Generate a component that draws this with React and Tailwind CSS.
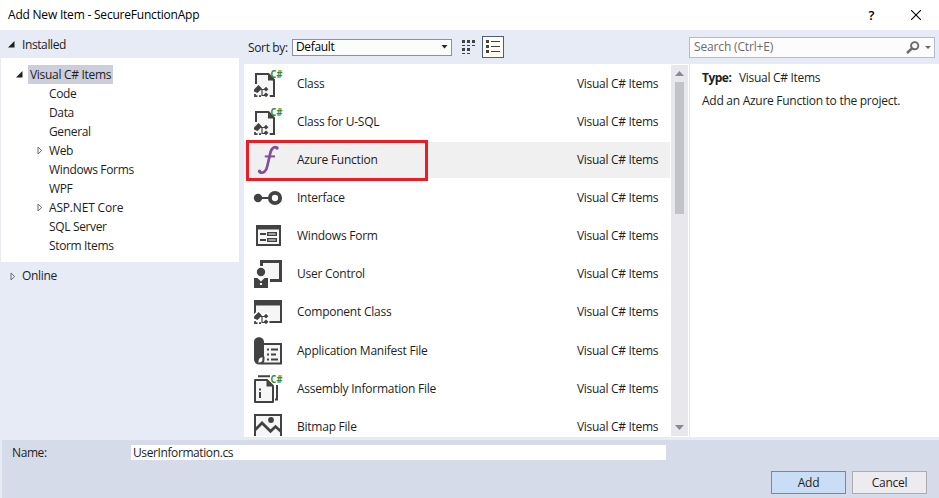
import React from "react";

const DARK = "#424242";

function Svg({ children }) {
  return (
    <svg width="28" height="28" viewBox="0 0 28 28" fill="none" className="block overflow-visible">
      {children}
    </svg>
  );
}

function CSharp() {
  return (
    <text x="16.6" y="7.5" fill="#388a34" fontSize="10" fontWeight="700" fontFamily="Noto Sans, Open Sans, sans-serif" letterSpacing="0" textLength="11.8" lengthAdjust="spacingAndGlyphs">
      C#
    </text>
  );
}

function Parts({ y = 0 }) {
  return (
    <g transform={`translate(0 ${y})`}>
      <path d="M0 18.5L4.5 14L8 17.5L3.5 22L0 20.5Z" fill={DARK} />
      <path d="M6 18.5H11M8 18.5V24.5H11.5" stroke={DARK} strokeWidth="1.2" />
      <path d="M12 15.8L14.4 18.2L12 20.6L9.6 18.2ZM12 21.4L14.4 23.8L12 26.2L9.6 23.8Z" fill={DARK} />
      <path d="M1 23V25.2H3.5M5 25.2H7" stroke={DARK} strokeWidth="1.7" />
    </g>
  );
}

function ClassIcon() {
  return (
    <Svg>
      <path d="M2 4H14L20 10V26H2Z" fill="#f6f6f6" />
      <path d="M2 14V4H14.5L20 10V26H15.5" stroke={DARK} strokeWidth="2" />
      <path d="M14 4V10.5H20Z" fill={DARK} />
      <path d="M0 17L4 12.5L8.5 15H15.5V27H0Z" fill="#f6f6f6" />
      <Parts y={1} />
      <CSharp />
    </Svg>
  );
}

function FunctionIcon() {
  return (
    <Svg>
      <path d="M23.6 2.4C21 -.2 17.6 1.5 16.3 7L13.2 20.5C12.2 25.4 9 28.3 5.3 25.8" stroke="#824d9e" strokeWidth="2.7" />
      <circle cx="23" cy="2" r="1.7" fill="#824d9e" />
      <circle cx="5.6" cy="25.3" r="1.7" fill="#824d9e" />
      <path d="M10.8 10.4H21" stroke="#824d9e" strokeWidth="2" />
    </Svg>
  );
}

function InterfaceIcon() {
  return (
    <Svg>
      <circle cx="4" cy="14" r="4.2" fill={DARK} />
      <path d="M7 14H16" stroke={DARK} strokeWidth="2" />
      <circle cx="21" cy="14" r="5.1" fill="white" stroke={DARK} strokeWidth="3.9" />
    </Svg>
  );
}

function FormIcon() {
  return (
    <Svg>
      <path d="M3 4H26V23H3Z" fill="#f6f6f6" stroke={DARK} strokeWidth="2" />
      <path d="M2 3H27V7.5H2Z" fill={DARK} />
      <path d="M6 12H12M6 18H12" stroke={DARK} strokeWidth="2" />
      <path d="M13.7 10.7H22.3V13.3H13.7ZM13.7 16.7H22.3V19.3H13.7Z" fill="white" stroke={DARK} strokeWidth="1.4" />
    </Svg>
  );
}

function UserIcon() {
  return (
    <Svg>
      <path d="M7.5 1.5H26.5V20.5H7.5Z" fill="#f6f6f6" />
      <path d="M7.5 6V1.5H26.5V20.5H16" stroke={DARK} strokeWidth="3" />
      <circle cx="7" cy="12" r="5.3" fill="white" />
      <circle cx="7" cy="12" r="4.2" fill={DARK} />
      <path d="M0 18H3.5L7 21.5L10.5 18H14V28H0Z" fill={DARK} />
      <path d="M6 23H8V25H6Z" fill="white" />
    </Svg>
  );
}

function ComponentIcon() {
  return (
    <Svg>
      <path d="M1 3H27V24H1Z" fill="#f6f6f6" />
      <path d="M1 16V3H27V24H15.5" stroke={DARK} strokeWidth="2" />
      <path d="M0 2H28V7.5H0Z" fill={DARK} />
      <path d="M0 16L4 12.5L8.5 15H15V28H0Z" fill="white" />
      <Parts y={0} />
    </Svg>
  );
}

function ManifestIcon() {
  return (
    <Svg>
      <path d="M9 7H27V26.5H7" fill="#f6f6f6" stroke={DARK} strokeWidth="2" />
      <path d="M0 5C0 -1.4 10 -1.4 10 5V20.5C5.5 19.5 3.3 23.5 5.3 27.5C2 27.5 0 25 0 22Z" fill={DARK} />
      <path d="M9.5 19.5V22.5C9.5 25.5 7.5 26.5 5 26.5" stroke={DARK} strokeWidth="2" />
      <path d="M13 12.5H15M17 12.5H24M13 17.5H15M17 17.5H22M13 22.5H15M17 22.5H24" stroke={DARK} strokeWidth="1.8" />
    </Svg>
  );
}

function AssemblyIcon() {
  return (
    <Svg>
      <path d="M4 1.2H16M23 10V24.5H21" stroke={DARK} strokeWidth="2" />
      <path d="M1 5H13L19 11V27H1Z" fill="#f6f6f6" stroke={DARK} strokeWidth="2" strokeLinejoin="round" />
      <path d="M12.5 5V11.5H19Z" fill={DARK} />
      <path d="M5 13.5H7V15.5H5ZM5 17H7V23H5Z" fill={DARK} />
      <CSharp />
    </Svg>
  );
}

function BitmapIcon() {
  return (
    <Svg>
      <path d="M1 2H27V30H1Z" fill="#f6f6f6" stroke={DARK} strokeWidth="2" />
      <circle cx="17" cy="7" r="2.9" fill={DARK} />
      <path d="M1 17L8 10L16.5 18.3L21.5 13.5L27 18.5" stroke={DARK} strokeWidth="2.7" />
    </Svg>
  );
}

const ITEMS = [
  ["Class", ClassIcon],
  ["Class for U-SQL", ClassIcon],
  ["Azure Function", FunctionIcon],
  ["Interface", InterfaceIcon],
  ["Windows Form", FormIcon],
  ["User Control", UserIcon],
  ["Component Class", ComponentIcon],
  ["Application Manifest File", ManifestIcon],
  ["Assembly Information File", AssemblyIcon],
  ["Bitmap File", BitmapIcon],
];

const TREE = [
  ["Code"],
  ["Data"],
  ["General"],
  ["Web", true],
  ["Windows Forms"],
  ["WPF"],
  ["ASP.NET Core", true],
  ["SQL Server"],
  ["Storm Items"],
];

function Expanded() {
  return (
    <svg width="7" height="7" viewBox="0 0 7 7" className="shrink-0">
      <path d="M6.5 0V6.5H0Z" fill="#1e1e1e" />
    </svg>
  );
}

function Collapsed() {
  return (
    <svg width="6" height="9" viewBox="0 0 6 9" fill="none" className="shrink-0">
      <path d="M1 1V8L4.7 4.5Z" stroke="#6a6a6a" />
    </svg>
  );
}

function Sidebar() {
  return (
    <aside className="w-[239px] shrink-0 pl-px">
      <div className="flex h-7 items-center gap-[7px] pl-[7px]">
        <Expanded />
        <span className="pt-px tracking-[-0.4px]">Installed</span>
      </div>
      <div className="h-[204px] bg-white pt-[7px]">
        <div className="flex h-[19px] items-center pl-[15px]">
          <Expanded />
          <span className="ml-[5px] h-[19px] w-[85px] bg-[#cccedb] pl-[2px] leading-[19px]">Visual C# Items</span>
        </div>
        {TREE.map(([name, branch]) => (
          <div key={name} className="flex h-[19px] items-center pl-9">
            <span className="w-3">{branch && <Collapsed />}</span>
            <span className={name === "ASP.NET Core" ? "tracking-[-0.18px]" : "tracking-[-0.35px]"}>{name}</span>
          </div>
        ))}
      </div>
      <div className="flex h-7 items-center gap-[6px] pl-[9px]">
        <Collapsed />
        <span>Online</span>
      </div>
    </aside>
  );
}

function Toolbar() {
  return (
    <div className="flex h-[34px] items-center">
      <span className="ml-1 w-[44px] pt-[2px] tracking-[-0.35px]">Sort by:</span>
      <div className="flex h-[17px] w-[160px] items-center justify-between border border-[#8591ac] bg-[#fcfcfc] pr-[3px] pl-[3px] text-black">
        <span className="tracking-[-0.35px]">Default</span>
        <svg width="7" height="4" viewBox="0 0 7 4"><path d="M0.5 0H6.5L3.5 3.5Z" fill="#1b293e" /></svg>
      </div>
      <svg width="14" height="14" viewBox="0 0 14 14" fill={DARK} shapeRendering="crispEdges" className="ml-[10px]">
        <path d="M0 0h3v3H0zM5 0h3v3H5zM10 0h3v3h-3zM0 8h3v3H0zM5 8h3v3H5zM0 5h3v1H0zM5 5h3v1H5zM10 5h3v1h-3zM0 13h3v1H0zM5 13h3v1H5z" />
      </svg>
      <div className="ml-[6px] flex h-[22px] w-[22px] items-center justify-center border border-[#4b5c82] bg-[#fffcf4]">
        <svg width="14" height="14" viewBox="0 0 14 14" fill={DARK} shapeRendering="crispEdges">
          <path d="M0 0h3v3H0zM0 5h3v3H0zM0 10h3v3H0zM5 1h9v1H5zM5 6h9v1H5zM5 11h9v1H5z" />
        </svg>
      </div>
    </div>
  );
}

function ItemList() {
  return (
    <div className="relative flex h-[373px] overflow-hidden bg-white pt-px">
      <div className="h-[371px] w-[427px] overflow-hidden">
        {ITEMS.map(([name, Icon], i) => (
          <div key={name} className={i === 6 ? "h-[39px] pt-px" : "h-[38px] pt-px"}>
            <div className={`flex h-9 w-[426px] items-center pl-[10px] ${i === 2 ? "bg-[#f0f0f0]" : ""}`}>
              <Icon />
              <span className="ml-[15px] grow tracking-[-0.24px]">{name}</span>
              <span className="w-[93px]">Visual C# Items</span>
            </div>
          </div>
        ))}
      </div>
      <div className="flex h-[371px] w-[17px] flex-col items-center bg-[#e8e8ec] pt-[6px] pb-[6px]">
        <svg width="9" height="5" viewBox="0 0 9 5"><path d="M0 5H9L4.5 0Z" fill="#868999" /></svg>
        <div className="mt-[6px] h-[132px] w-[9px] bg-[#c2c3c9]" />
        <svg width="9" height="5" viewBox="0 0 9 5" className="mt-auto"><path d="M0 0H9L4.5 5Z" fill="#868999" /></svg>
      </div>
      <div className="absolute top-[76px] left-[2px] h-[41px] w-[182px] border-3 border-[#ed1c24]" />
    </div>
  );
}

function Details() {
  return (
    <section className="flex w-[250px] flex-col">
      <div className="flex h-[34px] items-center">
        <div className="flex h-[21px] w-[246px] items-center border border-[#b4bccb] bg-[#fcfcfc] pl-1 text-[#6d6d6d]">
          <span className="grow tracking-[-0.15px]">Search (Ctrl+E)</span>
          <svg width="14" height="13" viewBox="0 0 14 13" fill="none" stroke="#6a6a6a">
            <circle cx="8.7" cy="4.7" r="3.6" strokeWidth="1.9" />
            <path d="M6 7.3L1 12" strokeWidth="2.5" />
          </svg>
          <svg width="6" height="3" viewBox="0 0 6 3" className="mr-[3px] ml-[5px]"><path d="M0 0H6L3 3Z" fill="#6a6a6a" /></svg>
        </div>
      </div>
      <div className="h-[373px] border-l border-[#e6e7ed] bg-white pl-3">
        <div className="mt-[5px] flex h-[18px] items-center">
          <b className="w-[37px] tracking-[-0.5px]">Type:</b>
          <span>Visual C# Items</span>
        </div>
        <div className="mt-[5px] h-[18px] leading-[18px] tracking-[-0.27px]">Add an Azure Function to the project.</div>
      </div>
    </section>
  );
}

export default function App() {
  return (
    <div className="flex h-[498px] w-[939px] flex-col overflow-hidden bg-[#e6ebf5] font-['Open_Sans','Noto_Sans',sans-serif] text-[12px] leading-[18px] tracking-[-0.3px] whitespace-nowrap text-[#1e1e1e]">
      <header className="flex h-[30px] shrink-0 items-center bg-white pl-2 text-black">
        <span className="grow tracking-[-0.21px]">Add New Item - SecureFunctionApp</span>
        <span className="mr-[37px] text-[13px] font-semibold">?</span>
        <svg width="10" height="10" viewBox="0 0 10 10" className="mr-[18px]">
          <path d="M0 0L10 10M10 0L0 10" stroke="black" strokeWidth="1.1" />
        </svg>
      </header>
      <main className="flex h-[407px] shrink-0">
        <Sidebar />
        <section className="ml-[5px] w-[445px] shrink-0">
          <Toolbar />
          <ItemList />
        </section>
        <Details />
      </main>
      <footer className="mt-[3px] ml-[2px] h-[58px] bg-[#d6dbe9] pt-[5px]">
        <div className="flex h-[15px] items-center pl-[10px]">
          <label className="w-[119px] tracking-[-0.4px]">Name:</label>
          <div className="h-[15px] w-[535px] bg-white pl-[2px] leading-[15px] tracking-[-0.4px]">UserInformation.cs</div>
        </div>
        <div className="mt-[11px] flex justify-end gap-[6px] pr-3">
          <button className="h-[23px] w-[75px] border border-[#3399ff] bg-[#c9def5]">Add</button>
          <button className="h-[23px] w-[75px] border border-[#acacac] bg-[#ececf0]">Cancel</button>
        </div>
      </footer>
    </div>
  );
}
